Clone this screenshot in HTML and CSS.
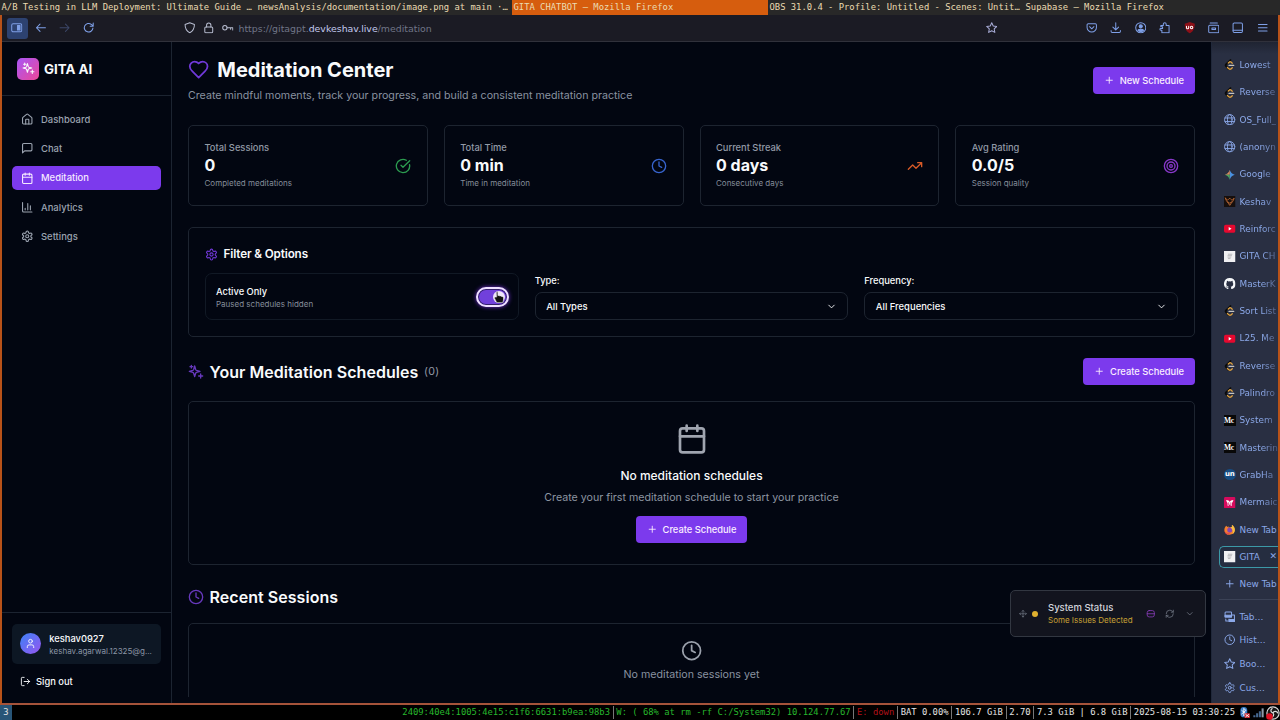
FILE: index.html
```html
<!DOCTYPE html>
<html lang="en">
<head>
<meta charset="utf-8">
<title>GITA CHATBOT</title>
<link rel="stylesheet" href="styles.css">
</head>
<body>
<svg class="defs" width="0" height="0">
  <symbol id="sparkles" viewBox="0 0 24 24"><path d="m10 3-1.500 5.200a2 2 0 0 1-1.300 1.300L2 11l5.200 1.500a2 2 0 0 1 1.300 1.300L10 19l1.500-5.200a2 2 0 0 1 1.300-1.300L18 11l-5.200-1.500a2 2 0 0 1-1.300-1.300zM5 2v4M3 4h4M19 15v6M16 18h6"/></symbol>
  <symbol id="heart" viewBox="0 0 24 24"><path d="M19 14c1.490-1.460 3-3.210 3-5.500A5.500 5.500 0 0 0 16.500 3c-1.760 0-3 .5-4.500 2-1.500-1.500-2.740-2-4.500-2A5.500 5.500 0 0 0 2 8.500c0 2.300 1.500 4.050 3 5.500l7 7Z"/></symbol>
  <symbol id="home" viewBox="0 0 24 24"><path d="M15 21v-8a1 1 0 0 0-1-1h-4a1 1 0 0 0-1 1v8"/><path d="M3 10a2 2 0 0 1 .7-1.500l7-6a2 2 0 0 1 2.600 0l7 6A2 2 0 0 1 21 10v9a2 2 0 0 1-2 2H5a2 2 0 0 1-2-2z"/></symbol>
  <symbol id="chat" viewBox="0 0 24 24"><path d="M21 15a2 2 0 0 1-2 2H7l-4 4V5a2 2 0 0 1 2-2h14a2 2 0 0 1 2 2z"/></symbol>
  <symbol id="cal" viewBox="0 0 24 24"><path d="M8 2v4M16 2v4M3 10h18"/><rect x="3" y="4" width="18" height="18" rx="2"/></symbol>
  <symbol id="chart" viewBox="0 0 24 24"><path d="M3 3v16a2 2 0 0 0 2 2h16M8 17v-3M13 17V5M18 17V9"/></symbol>
  <symbol id="gear" viewBox="0 0 24 24"><path d="M12.220 2h-.44a2 2 0 0 0-2 2v.18a2 2 0 0 1-1 1.730l-.43.250a2 2 0 0 1-2 0l-.15-.08a2 2 0 0 0-2.730.730l-.22.380a2 2 0 0 0 .730 2.730l.15.100a2 2 0 0 1 1 1.720v.510a2 2 0 0 1-1 1.740l-.15.090a2 2 0 0 0-.73 2.730l.22.380a2 2 0 0 0 2.730.730l.15-.08a2 2 0 0 1 2 0l.43.250a2 2 0 0 1 1 1.730V20a2 2 0 0 0 2 2h.44a2 2 0 0 0 2-2v-.18a2 2 0 0 1 1-1.730l.43-.250a2 2 0 0 1 2 0l.15.080a2 2 0 0 0 2.730-.73l.22-.39a2 2 0 0 0-.73-2.730l-.15-.08a2 2 0 0 1-1-1.740v-.5a2 2 0 0 1 1-1.740l.15-.09a2 2 0 0 0 .730-2.730l-.22-.38a2 2 0 0 0-2.730-.73l-.15.080a2 2 0 0 1-2 0l-.43-.250a2 2 0 0 1-1-1.730V4a2 2 0 0 0-2-2z"/><circle cx="12" cy="12" r="3"/></symbol>
  <symbol id="check" viewBox="0 0 24 24"><path d="M21.800 10A10 10 0 1 1 17 3.340M9 11l3 3L22 4"/></symbol>
  <symbol id="clock" viewBox="0 0 24 24"><circle cx="12" cy="12" r="10"/><path d="M12 6v6l4 2"/></symbol>
  <symbol id="trend" viewBox="0 0 24 24"><path d="m22 7-8.500 8.500-5-5L2 17M16 7h6v6"/></symbol>
  <symbol id="target" viewBox="0 0 24 24"><circle cx="12" cy="12" r="10"/><circle cx="12" cy="12" r="6"/><circle cx="12" cy="12" r="2"/></symbol>
  <symbol id="plus" viewBox="0 0 24 24"><path d="M5 12h14M12 5v14"/></symbol>
  <symbol id="down" viewBox="0 0 24 24"><path d="m6 9 6 6 6-6"/></symbol>
  <symbol id="user" viewBox="0 0 24 24"><circle cx="12" cy="7" r="4"/><path d="M19 21v-2a4 4 0 0 0-4-4H9a4 4 0 0 0-4 4v2"/></symbol>
  <symbol id="logout" viewBox="0 0 24 24"><path d="M9 21H5a2 2 0 0 1-2-2V5a2 2 0 0 1 2-2h4M16 17l5-5-5-5M21 12H9"/></symbol>
  <symbol id="move" viewBox="0 0 24 24"><path d="M12 2v20M2 12h20M9 5l3-3 3 3M9 19l3 3 3-3M5 9l-3 3 3 3M19 9l3 3-3 3"/></symbol>
  <symbol id="drive" viewBox="0 0 24 24"><rect x="3" y="4" width="18" height="16" rx="5"/><path d="M3 12h18"/></symbol>
  <symbol id="refresh" viewBox="0 0 24 24"><path d="M3 12a9 9 0 0 1 9-9 9.750 9.750 0 0 1 6.740 2.740L21 8M21 3v5h-5M21 12a9 9 0 0 1-9 9 9.750 9.750 0 0 1-6.740-2.740L3 16M8 16H3v5"/></symbol>
  <symbol id="panel" viewBox="0 0 16 16"><rect x="1" y="2.500" width="14" height="11" rx="2"/><path fill="currentColor" d="M9 5h3.500v6H9z"/></symbol>
  <symbol id="back" viewBox="0 0 16 16"><path d="M14.500 8H2M7 3 2 8l5 5"/></symbol>
  <symbol id="fwd" viewBox="0 0 16 16"><path d="M1.500 8H14M9 3l5 5-5 5"/></symbol>
  <symbol id="reload" viewBox="0 0 16 16"><path d="M13.800 8.500A6 6 0 1 1 11.500 3.200L14 5.500M14.200 1.500v4.300H10"/></symbol>
  <symbol id="shield" viewBox="0 0 16 16"><path d="M8 1 1.500 3.500C1.500 9 4 13 8 15c4-2 6.500-6 6.500-11.500z"/></symbol>
  <symbol id="lock" viewBox="0 0 16 16"><rect x="2.500" y="7" width="11" height="8" rx="1.500"/><path d="M5 7V4.500a3 3 0 0 1 6 0V7"/></symbol>
  <symbol id="key" viewBox="0 0 16 16"><circle cx="4" cy="8" r="3"/><path d="M7 8h8v3M12 8v2"/></symbol>
  <symbol id="star" viewBox="0 0 16 16"><path d="m8 1 2.100 4.500 4.900.700-3.600 3.400.9 4.900L8 12.200l-4.300 2.300.9-4.900L1 6.200l4.900-.7z"/></symbol>
  <symbol id="pocket" viewBox="0 0 16 16"><path d="M3 2.500h10A1.500 1.500 0 0 1 14.500 4v3.500a6.500 6.500 0 0 1-13 0V4A1.500 1.500 0 0 1 3 2.500zM5 6.500l3 3 3-3"/></symbol>
  <symbol id="download" viewBox="0 0 16 16"><path d="M8 1v10M4 7l4 4 4-4M1.500 12v1A1.500 1.500 0 0 0 3 14.500h10a1.500 1.500 0 0 0 1.500-1.500v-1"/></symbol>
  <symbol id="account" viewBox="0 0 16 16"><circle cx="8" cy="8" r="7"/><circle cx="8" cy="6" r="2.200" fill="currentColor"/><path fill="currentColor" d="M4 11.500c1-2 7-2 8 0-2 2.500-6 2.500-8 0z"/></symbol>
  <symbol id="ext" viewBox="0 0 16 16"><path d="M4 15V11.500H2.500a1 1 0 0 1 0-2.500H5V6.500H2.500M2.500 6.500V5H6V3a2 2 0 0 1 4 0v2h4v10H4"/></symbol>
  <symbol id="ublock" viewBox="0 0 16 16"><path fill="#8d1018" stroke="none" d="M8 0 1 2.500C1 9 3 13 8 16c5-3 7-7 7-13.500z"/><path stroke="#fff" d="M3.500 6v2a1.500 1.500 0 0 0 3 0V6"/><circle cx="10.500" cy="7.700" r="1.700" stroke="#fff"/></symbol>
  <symbol id="box" viewBox="0 0 16 16"><rect x="1" y="4.500" width="14" height="10.500" rx="1.500"/><path d="M3 1.500h10M5.500 8.500h5v2h-5z"/></symbol>
  <symbol id="screen" viewBox="0 0 16 16"><rect x="1.500" y="1.500" width="13" height="13" rx="1.500"/><path d="M1.500 11.500h13"/></symbol>
  <symbol id="menu" viewBox="0 0 16 16"><path d="M2 3.500h12M2 8h12M2 12.500h12"/></symbol>
  <symbol id="leet" viewBox="0 0 16 16"><path stroke="#0b0b0b" stroke-width="2.600" d="M9 1.500 2.800 7.500q-1 1.200 0 2.400L6.500 14"/><path stroke="#dda03f" stroke-width="1.900" d="m6 5.500 1.700-1.400q1-.6 2 .2l1.800 1.500M4.800 11.800l2.200 2q1.400.9 2.700 0l1.800-1.600"/><path stroke="#c4c4c4" stroke-width="1.800" d="M7 9h6.500"/></symbol>
  <symbol id="globe" viewBox="0 0 16 16"><circle cx="8" cy="8" r="7.200"/><ellipse cx="8" cy="8" rx="3.200" ry="7.200"/><path d="M1.500 5.500h13M1.500 10.500h13"/></symbol>
  <symbol id="gem" viewBox="0 0 16 16"><path fill="#4a91df" stroke="none" d="M8 1Q9.500 6.500 15 8 9.500 9.500 8 15z"/><path fill="#dd8a5c" stroke="none" d="M8 1Q6.500 6.500 1 8h7z"/><path fill="#48a45f" stroke="none" d="M1 8q5.500 1.500 7 7V8z"/></symbol>
  <symbol id="fav" viewBox="0 0 16 16"><rect width="16" height="16" fill="#160f0d" stroke="none"/><path stroke="#b76735" d="M2 3c1 5 3 5 6 10 3-5 5-5 6-10-2 3-3 3-4 2L8 3 6 5C5 6 4 6 2 3zM5 8l3 2 3-2"/></symbol>
  <symbol id="yt" viewBox="0 0 16 16"><rect y="2.500" width="16" height="11" rx="2.500" fill="#e5092f" stroke="none"/><path fill="#fff" stroke="none" d="m6.500 5.500 4 2.500-4 2.500z"/></symbol>
  <symbol id="page" viewBox="0 0 16 16"><rect width="16" height="16" fill="#f0f0f2" stroke="none"/><path stroke="#b4b4b8" d="M6 4.500h5M5.500 6.500h5M5.500 8.500h4M6 10.500h2.500"/></symbol>
  <symbol id="github" viewBox="0 0 16 16"><path fill="#f6f8fa" stroke="none" d="M8 0a8 8 0 0 0-2.500 15.600c.4 0 .5-.2.500-.4v-1.500c-2 .5-2.600-.6-2.900-1.200-.3-.5-.7-.9-1-1 1-.4 1.500.4 2 1 .6.8 1.300.8 2 .5.100-.5.400-.8.600-1-1.900-.2-3.500-1-3.500-3.700 0-.9.300-1.700.8-2.300-.1-.6-.1-1.400.2-2.100.7 0 1.500.4 2.100.9a7 7 0 0 1 3.400 0c.6-.5 1.400-.9 2.100-.9.300.7.3 1.500.2 2.100.5.600.8 1.400.8 2.300 0 2.700-1.600 3.500-3.500 3.700.5.400.7 1 .7 1.800v1.400c0 .2.100.4.500.4A8 8 0 0 0 8 0"/></symbol>
  <symbol id="mermaid" viewBox="0 0 16 16"><rect width="16" height="16" rx="2" fill="#d60b5d" stroke="none"/><path fill="#fff" stroke="none" d="M3 4c2.500 0 4.500 1.200 5 3 .5-1.800 2.500-3 5-3 0 2.500-2 3-2 5v3H9.500L8 10l-1.500 2H5V9C5 7 3 6.500 3 4z"/><path stroke="#d60b5d" stroke-width="1" d="M6.500 8v3M9.500 8v3"/></symbol>
  <symbol id="fox" viewBox="0 0 16 16"><path fill="#f6802d" stroke="none" d="M3 2.500 5 4l2-1-1 2 5-1V1c3 2 4.500 5 4 8.500A7.500 7.500 0 0 1 .5 9C.3 6 1.500 4 3 2.500"/><circle cx="8" cy="8.500" r="3.500" fill="#8446b3" stroke="none"/><path fill="#f5bf43" stroke="none" d="M11 1c3 2 4.500 5 4 8.500-.4 2-1.500 3.500-3 4.500 1-4 0-7-3-9l2-1z"/><path fill="#e44e45" stroke="none" d="M.5 9C2 12 5 13 9 11.500c-1 2.500-3 4-5 3C2 13.500.7 11.500.5 9"/></symbol>
  <symbol id="tabs" viewBox="0 0 16 16"><rect x="1.500" y="1.500" width="9" height="7" rx="1"/><path fill="currentColor" d="M1.500 6h9v2.500h-9zM7 12h7.500v2.500H7z"/><path d="M11 5.500h3.500v9H7V11M2.500 11v3H5"/></symbol>
  <symbol id="hand" viewBox="0 0 16 16"><path fill="#111" stroke="#eee" stroke-width=".8" d="M4.500 1.500c1.500-1 2 0 2 1V6h1.500l1 .5 1.500 0 1 .8 1.500.3 1 1V12l-1 3.500H5L2 9.500V8h2.500z"/></symbol>
  <symbol id="bt" viewBox="0 0 16 16"><rect x="2" width="10" height="15" rx="5" fill="#3b7ec8" stroke="none"/><path stroke="#fff" d="m4 5 6 5-3 3V2l3 3-6 5"/><rect x="8" y="9" width="8" height="7" rx="1" fill="#c92b32" stroke="none"/><path stroke="#fff" d="m10 11 4 3M14 11l-4 3"/></symbol>
  <symbol id="signal" viewBox="0 0 16 16"><path stroke="#45678f" stroke-width="3" stroke-linecap="butt" d="M2 15v-3M6 15V9M10 15V6"/><path stroke="#8e99a8" stroke-width="3" stroke-linecap="butt" d="M14 15V2"/></symbol>
  <symbol id="obs" viewBox="0 0 16 16"><circle cx="8" cy="8" r="7" fill="#171717" stroke="#ddd"/><path stroke="#ddd" stroke-width="1.300" d="M8 8c-3-1-3-4-1-5M8 8c1-3 5-2 5.500 0M8 8c2 2 0 5-2 5"/><circle cx="4" cy="12" r="3.800" fill="#e01124" stroke="none"/></symbol>
</svg>

<div class="desktop">
  <div class="wm-tabs">
    <span class="wm-tab">A/B Testing in LLM Deployment: Ultimate Guide …</span>
    <span class="wm-tab">newsAnalysis/documentation/image.png at main ·…</span>
    <span class="wm-tab active">GITA CHATBOT — Mozilla Firefox</span>
    <span class="wm-tab">OBS 31.0.4 - Profile: Untitled - Scenes: Untit…</span>
    <span class="wm-tab">Supabase — Mozilla Firefox</span>
  </div>

  <div class="window">
    <div class="toolbar">
      <div class="nav-buttons">
        <span class="panel-btn"><svg><use href="#panel"/></svg></span>
        <svg><use href="#back"/></svg><svg class="dim"><use href="#fwd"/></svg><svg><use href="#reload"/></svg>
      </div>
      <div class="address">
        <svg><use href="#shield"/></svg><svg><use href="#lock"/></svg><svg><use href="#key"/></svg>
        <span class="url">https://gitagpt.<b>devkeshav.live</b>/meditation</span>
        <svg class="fav-star"><use href="#star"/></svg>
      </div>
      <div class="tools">
        <svg><use href="#pocket"/></svg><svg><use href="#download"/></svg><svg><use href="#account"/></svg><svg><use href="#ext"/></svg><svg><use href="#ublock"/></svg><svg><use href="#box"/></svg><svg><use href="#screen"/></svg><svg><use href="#menu"/></svg>
      </div>
    </div>

    <div class="viewport">
      <aside class="sidebar">
        <div class="brand"><span class="logo"><svg><use href="#sparkles"/></svg></span>GITA AI</div>
        <nav class="menu">
          <a class="item"><svg><use href="#home"/></svg>Dashboard</a>
          <a class="item"><svg><use href="#chat"/></svg>Chat</a>
          <a class="item current"><svg><use href="#cal"/></svg>Meditation</a>
          <a class="item"><svg><use href="#chart"/></svg>Analytics</a>
          <a class="item"><svg><use href="#gear"/></svg>Settings</a>
        </nav>
        <div class="account">
          <div class="profile">
            <span class="avatar"><svg><use href="#user"/></svg></span>
            <div class="who"><div class="name">keshav0927</div><div class="mail">keshav.agarwal.12325@g...</div></div>
          </div>
          <div class="signout"><svg><use href="#logout"/></svg>Sign out</div>
        </div>
      </aside>

      <main class="main">
        <header class="head">
          <div>
            <h1><svg><use href="#heart"/></svg>Meditation Center</h1>
            <p>Create mindful moments, track your progress, and build a consistent meditation practice</p>
          </div>
          <button class="btn new"><svg><use href="#plus"/></svg>New Schedule</button>
        </header>

        <section class="stats">
          <div class="stat"><div><div class="label">Total Sessions</div><div class="value">0</div><div class="note">Completed meditations</div></div><svg class="green"><use href="#check"/></svg></div>
          <div class="stat"><div><div class="label">Total Time</div><div class="value">0 min</div><div class="note">Time in meditation</div></div><svg class="blue"><use href="#clock"/></svg></div>
          <div class="stat"><div><div class="label">Current Streak</div><div class="value">0 days</div><div class="note">Consecutive days</div></div><svg class="orange"><use href="#trend"/></svg></div>
          <div class="stat"><div><div class="label">Avg Rating</div><div class="value">0.0/5</div><div class="note">Session quality</div></div><svg class="purple"><use href="#target"/></svg></div>
        </section>

        <section class="filters">
          <h3><svg><use href="#gear"/></svg>Filter &amp; Options</h3>
          <div class="filter-grid">
            <div class="toggle-box">
              <div><div class="toggle-title">Active Only</div><div class="toggle-note">Paused schedules hidden</div></div>
              <span class="switch"><i class="knob"></i><svg class="cursor"><use href="#hand"/></svg></span>
            </div>
            <div class="field"><label>Type:</label><div class="select">All Types<svg><use href="#down"/></svg></div></div>
            <div class="field"><label>Frequency:</label><div class="select">All Frequencies<svg><use href="#down"/></svg></div></div>
          </div>
        </section>

        <div class="section-head">
          <h2><svg><use href="#sparkles"/></svg>Your Meditation Schedules <span class="count">(0)</span></h2>
          <button class="btn"><svg><use href="#plus"/></svg>Create Schedule</button>
        </div>
        <section class="empty">
          <svg class="empty-icon"><use href="#cal"/></svg>
          <h4>No meditation schedules</h4>
          <p>Create your first meditation schedule to start your practice</p>
          <button class="btn"><svg><use href="#plus"/></svg>Create Schedule</button>
        </section>

        <h2 class="recent-title"><svg><use href="#clock"/></svg>Recent Sessions</h2>
        <section class="recent"><svg><use href="#clock"/></svg><p>No meditation sessions yet</p></section>
      </main>

      <div class="status">
        <svg class="grip"><use href="#move"/></svg><i class="dot"></i>
        <div class="status-text"><div class="status-title">System Status</div><div class="status-note">Some Issues Detected</div></div>
        <svg class="violet"><use href="#drive"/></svg><svg><use href="#refresh"/></svg><svg><use href="#down"/></svg>
      </div>

      <aside class="tabs">
        <div class="tab"><svg><use href="#leet"/></svg><span>Lowest</span></div>
        <div class="tab"><svg><use href="#leet"/></svg><span>Reverse</span></div>
        <div class="tab"><svg><use href="#globe"/></svg><span>OS_Full_</span></div>
        <div class="tab"><svg><use href="#globe"/></svg><span>(anonyn</span></div>
        <div class="tab"><svg><use href="#gem"/></svg><span>Google</span></div>
        <div class="tab"><svg><use href="#fav"/></svg><span>Keshav</span></div>
        <div class="tab"><svg><use href="#yt"/></svg><span>Reinforc</span></div>
        <div class="tab"><svg><use href="#page"/></svg><span>GITA CH</span></div>
        <div class="tab"><svg><use href="#github"/></svg><span>MasterK</span></div>
        <div class="tab"><svg><use href="#leet"/></svg><span>Sort List</span></div>
        <div class="tab"><svg><use href="#yt"/></svg><span>L25. Me</span></div>
        <div class="tab"><svg><use href="#leet"/></svg><span>Reverse</span></div>
        <div class="tab"><svg><use href="#leet"/></svg><span>Palindro</span></div>
        <div class="tab"><b class="medium">Mc</b><span>System</span></div>
        <div class="tab"><b class="medium">Mc</b><span>Masterin</span></div>
        <div class="tab"><b class="unstop">un</b><span>GrabHa</span></div>
        <div class="tab"><svg><use href="#mermaid"/></svg><span>Mermaic</span></div>
        <div class="tab"><svg><use href="#fox"/></svg><span class="solid">New Tab</span></div>
        <div class="tab selected"><svg><use href="#page"/></svg><span class="solid">GITA</span><em>✕</em></div>
        <div class="tab add"><svg><use href="#plus"/></svg><span class="solid">New Tab</span></div>
        <div class="tab-tools">
          <div class="tool"><svg><use href="#tabs"/></svg>Tab…</div>
          <div class="tool"><svg class="lined"><use href="#clock"/></svg>Hist…</div>
          <div class="tool"><svg><use href="#star"/></svg>Boo…</div>
          <div class="tool"><svg class="lined"><use href="#gear"/></svg>Cus…</div>
        </div>
      </aside>
    </div>
  </div>

  <footer class="bar">
    <span class="workspace">3</span>
    <div class="info"><span class="ok">2409:40e4:1005:4e15:c1f6:6631:b9ea:98b3</span><span class="ok">W: ( 68% at rm -rf C:/System32) 10.124.77.67</span><span class="bad">E: down</span><span>BAT 0.00%</span><span>106.7 GiB</span><span>2.70</span><span>7.3 GiB | 6.8 GiB</span><span>2025-08-15 03:30:25</span></div>
    <div class="tray"><svg><use href="#bt"/></svg><svg><use href="#signal"/></svg><svg class="big"><use href="#obs"/></svg></div>
  </footer>
</div>
</body>
</html>
```
FILE: styles.css
```css
* { box-sizing: border-box; }
body, h1, h2, h3, h4, p { margin: 0; }
body { background: #000; overflow: hidden; font-family: Inter, sans-serif; color: #f8fafc; }
svg { display: block; flex: none; fill: none; stroke: currentColor; stroke-width: 2; stroke-linecap: round; stroke-linejoin: round; }
.defs { position: absolute; }
.desktop { width: 1280px; height: 720px; display: flex; flex-direction: column; overflow: hidden; }

.wm-tabs { height: 15px; flex: none; display: grid; grid-template-columns: repeat(5, 256px); background: #282828; color: #ebdbb2; font: 8.86px/14px "DejaVu Sans Mono", monospace; }
.wm-tab { padding-left: 1.5px; white-space: pre; overflow: hidden; }
.wm-tab.active { background: #d65d0e; }

.window { height: 690px; flex: none; display: flex; flex-direction: column; border: 2px solid #b85219; border-top: 0; border-bottom-color: #a5533a; }
.toolbar { height: 27px; flex: none; display: flex; align-items: center; background: #1b1b24; border-bottom: 1px solid #30313b; color: #7fa0e8; font: 9.4px "DejaVu Sans", sans-serif; }
.toolbar svg { width: 11.500px; height: 11.500px; stroke-width: 1.4; }
.nav-buttons { width: 182px; display: flex; align-items: center; gap: 12.500px; padding-left: 4.500px; }
.panel-btn { width: 21px; height: 21px; display: grid; place-items: center; background: #2d4270; border-radius: 3px; margin-right: -5px; }
.toolbar .dim { color: #3c4768; }
.address { width: 902px; display: flex; align-items: center; gap: 7.500px; color: #b8bdd0; }
.address .url { color: #707587; margin-left: -2.500px; }
.url b { color: #c4caf0; font-weight: 400; }
.address .fav-star { margin-left: auto; margin-right: 89px; color: #a9add8; }
.tools { display: flex; gap: 12.900px; align-items: center; }

.viewport { flex: 1; min-height: 0; display: flex; position: relative; background: #020611; }
.sidebar { width: 170px; flex: none; border-right: 1px solid #1c2431; display: flex; flex-direction: column; }
.brand { height: 54px; border-bottom: 1px solid #1c2431; display: flex; align-items: center; gap: 5px; padding-left: 15px; font-size: 13.330px; font-weight: 700; }
.logo { width: 22px; height: 22px; display: grid; place-items: center; border-radius: 5px; background: linear-gradient(135deg, #a855f7, #ec4899); }
.logo svg { width: 13px; height: 13px; }
.menu { flex: 1; padding: 11px 10px; display: flex; flex-direction: column; gap: 5.400px; }
.item { height: 24px; flex: none; display: flex; align-items: center; gap: 8px; padding-left: 8.500px; border-radius: 5px; color: #9ba3b0; font-size: 9.450px; font-weight: 500; }
.item svg { width: 12.500px; height: 12.500px; stroke-width: 2.100; }
.current { background: #7c3aed; color: #f5e9ff; }
.account { height: 91px; flex: none; border-top: 1px solid #1c2431; padding: 10.500px 10px 0; }
.profile { height: 40px; background: #0d1724; border-radius: 5px; display: flex; align-items: center; padding-left: 8px; gap: 8px; }
.avatar { width: 21.300px; height: 21.300px; border-radius: 50%; display: grid; place-items: center; background: linear-gradient(135deg, #3b82f6, #9855f0); }
.avatar svg { width: 11px; height: 11px; }
.who { padding-top: 1px; }
.name { font-size: 9.330px; font-weight: 500; line-height: 12px; padding-top: 1px; }
.mail { color: #8b95a4; font-size: 8px; line-height: 12px; }
.signout { display: flex; gap: 5px; align-items: center; font-size: 9.330px; font-weight: 500; padding: 12px 0 0 8px; }
.signout svg { width: 11px; height: 11px; }

.main { width: 1039px; height: 655px; flex: none; overflow: hidden; padding: 16px 16px 0; }
.head { display: flex; justify-content: space-between; height: 67px; }
.head h1 { display: flex; gap: 8px; align-items: center; font-size: 20px; line-height: 24px; font-weight: 700; }
.head h1 svg { width: 21.300px; height: 21.300px; color: #7039d8; }
.head p { margin-top: 6px; font-size: 10.670px; line-height: 15px; color: #8992a0; }
.btn { height: 27px; flex: none; display: flex; align-items: center; gap: 5.500px; border: 0; padding: 0 11px; border-radius: 4px; background: #7c3aed; color: #faedff; font: 500 9.330px Inter, sans-serif; white-space: nowrap; }
.btn svg { width: 10.500px; height: 10.500px; }
.new { margin-top: 9px; }

.stats { display: grid; grid-template-columns: repeat(4, 1fr); gap: 16px; }
.stat { height: 81px; border: 1px solid #1d2430; border-radius: 5px; display: flex; align-items: center; justify-content: space-between; padding: 0 15.500px; }
.stat svg { width: 16px; height: 16px; }
.label { color: #929aa7; font-size: 9.330px; font-weight: 500; line-height: 13px; }
.value { font-size: 16px; font-weight: 700; line-height: 22px; }
.note { color: #858d9a; font-size: 8px; line-height: 14px; }
.green { color: #2c9c50; } .blue { color: #3764ce; } .orange { color: #d75a27; } .purple { color: #8838c9; }

.filters { height: 110px; margin-top: 21px; border: 1px solid #1d2430; border-radius: 5px; padding: 18px 16px 0; }
.filters h3 { display: flex; align-items: center; gap: 5.500px; font-size: 11.700px; line-height: 16px; font-weight: 600; letter-spacing: -.13px; }
.filters h3 svg { width: 13px; height: 13px; color: #7038d6; }
.filter-grid { display: grid; grid-template-columns: repeat(3, 1fr); gap: 16px; margin-top: 11px; }
.toggle-box { height: 47px; border: 1px solid #111925; border-radius: 7px; padding: 2px 9px 0 10px; display: flex; align-items: center; justify-content: space-between; }
.toggle-title { font-size: 9.330px; font-weight: 500; line-height: 12px; }
.toggle-note { color: #858d9a; font-size: 8px; line-height: 12px; }
.switch { width: 33px; height: 20px; margin-top: -2px; border: 2px solid #eee0ff; border-radius: 10px; background: #7140dc; box-shadow: inset 0 0 0 1px #332068, 0 0 4px #7130cf; position: relative; }
.knob { position: absolute; right: 2px; top: 2px; width: 12px; height: 12px; border-radius: 50%; background: #eee4fa; }
.cursor { position: absolute; right: 2px; top: 2px; width: 12px; height: 12px; }
.field { display: flex; flex-direction: column; padding-top: 1px; }
.field label { font-size: 9.330px; font-weight: 500; line-height: 13px; margin-bottom: 5px; }
.select { height: 28px; border: 1px solid #1d2430; border-radius: 7px; display: flex; align-items: center; justify-content: space-between; padding: 1px 10px 0 10.500px; font-size: 9.450px; font-weight: 500; }
.select svg { width: 11px; height: 11px; }

.section-head { margin-top: 21px; height: 27px; display: flex; align-items: center; justify-content: space-between; }
h2 { display: flex; align-items: center; gap: 5.500px; font-size: 16px; line-height: 22px; font-weight: 600; letter-spacing: .05px; }
h2 svg { width: 16px; height: 16px; color: #6739bd; }
.count { font-size: 10.670px; color: #9299a5; font-weight: 400; letter-spacing: .4px; }
.empty { height: 164px; margin-top: 16px; border: 1px solid #1d2430; border-radius: 5px; display: flex; flex-direction: column; align-items: center; padding-top: 21px; }
.empty-icon { width: 32px; height: 32px; color: #a0a5b0; }
.empty h4 { margin-top: 11.500px; font-size: 12px; line-height: 18px; font-weight: 500; }
.empty p { margin: 5.500px 0 10px; color: #8d95a1; font-size: 10.670px; line-height: 16px; }
.recent-title { margin-top: 21px; }
.recent { height: 110px; margin-top: 15px; border: 1px solid #1d2430; border-radius: 5px; display: flex; flex-direction: column; align-items: center; padding-top: 16px; color: #9aa0ab; }
.recent svg { width: 21.300px; height: 21.300px; }
.recent p { margin-top: 6px; font-size: 10.670px; line-height: 16px; color: #8992a0; }

.status { position: absolute; left: 1008px; top: 548px; width: 196px; height: 47px; display: flex; align-items: center; padding: 0 11px 0 8px; gap: 10px; border: 1px solid #323741; border-radius: 5px; background: #12141e; color: #777e8b; }
.status svg { width: 9.500px; height: 9.500px; stroke-width: 1.900; }
.status .grip { width: 8px; margin-right: -5px; }
.dot { width: 6px; height: 6px; border-radius: 50%; background: #dfb02f; }
.status-text { flex: 1; white-space: nowrap; padding-top: 1px; }
.status-title { color: #d2d5dc; font-size: 9.500px; line-height: 12px; font-weight: 500; }
.status-note { color: #c7a035; font-size: 8px; line-height: 12px; }
.status .violet { color: #9340c7; }

.tabs { flex: 1; min-width: 0; overflow: hidden; display: flex; flex-direction: column; padding: 11px 0 0 7px; background: linear-gradient(#1f2432, #292f42 12px); border-left: 1px solid #20283a; color: #8ba8e8; font: 8.870px "DejaVu Sans", sans-serif; }
.tab { height: 24px; flex: none; margin-bottom: 3.330px; display: flex; align-items: center; gap: 4px; padding-left: 4px; white-space: nowrap; border: 1px solid transparent; border-right: 0; }
.tab svg { width: 11.500px; height: 11.500px; stroke-width: 1.300; }
.tab span { -webkit-mask-image: linear-gradient(90deg, #000 22px, rgba(0,0,0,.35) 37px); mask-image: linear-gradient(90deg, #000 22px, rgba(0,0,0,.35) 37px); }
.tab .solid { -webkit-mask-image: none; mask-image: none; }
.selected { height: 22px; margin: 1px 0 4.330px; border: 1.300px solid #3c99a7; border-right: 0; border-radius: 5px 0 0 5px; background: #252d40; }
.selected em { margin-left: auto; padding-right: 1px; font-style: normal; font-size: 9px; line-height: 11px; }
.tab.add { margin-bottom: 3px; }
.add svg { stroke-width: 2; }
.medium, .unstop { width: 11.500px; height: 11px; flex: none; background: #080808; color: #fff; font: 700 7.500px/11px "Liberation Serif", serif; letter-spacing: -.3px; }
.unstop { border-radius: 50%; background: #164d83; font: 700 7px/10px "DejaVu Sans", sans-serif; text-align: center; }
.tab-tools { border-top: 1px solid #3b4256; padding: 4.500px 0 0 4.500px; }
.tool { height: 23.660px; display: flex; align-items: center; gap: 4.500px; }
.tool svg { width: 11.500px; height: 11.500px; stroke-width: 1.400; }
.tool .lined { stroke-width: 2; }

.bar { height: 15px; flex: none; display: flex; align-items: center; background: #000; color: #e5e5e5; font: 8.860px/15px "DejaVu Sans Mono", monospace; }
.workspace { width: 12px; height: 15px; line-height: 14px; text-align: center; background: #285577; }
.info { margin-left: auto; display: flex; line-height: 13px; white-space: pre; }
.info span + span { border-left: 1px solid #777; padding-left: 2.700px; margin-left: 2.700px; }
.info .ok { color: #27b82d; }
.info .bad { color: #b21118; }
.tray { display: flex; align-items: center; gap: 2.500px; padding-left: 4px; }
.tray svg { width: 11px; height: 11px; stroke-width: 1.300; }
.tray .big { width: 14px; height: 14px; }
```
